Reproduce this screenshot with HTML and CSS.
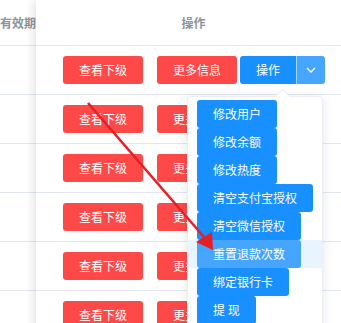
FILE: index.html
```html
<!DOCTYPE html>
<html lang="zh-CN">
<head>
    <meta charset="UTF-8">
    <title>用户列表</title>
    <link rel="stylesheet" href="styles.css">
</head>
<body>
    <div class="table">
        <div class="scroll-part">
            <div class="head-cell">有效期</div>
            <div class="cell"></div>
            <div class="cell"></div>
            <div class="cell"></div>
            <div class="cell"></div>
            <div class="cell"></div>
            <div class="cell"></div>
        </div>
        <div class="fixed-part">
            <div class="head-cell center">操作</div>
            <div class="cell ops">
                <button class="btn danger">查看下级</button>
                <button class="btn danger">更多信息</button>
                <div class="split">
                    <button class="btn primary">操作</button>
                    <button class="btn caret">
                        <svg width="10" height="6" viewBox="0 0 10 6"><path d="M1 1 L5 5 L9 1" fill="none" stroke="#fff" stroke-width="1.3"/></svg>
                    </button>
                </div>
            </div>
            <div class="cell ops"><button class="btn danger">查看下级</button><button class="btn danger">更多信息</button></div>
            <div class="cell ops"><button class="btn danger">查看下级</button><button class="btn danger">更多信息</button></div>
            <div class="cell ops"><button class="btn danger">查看下级</button><button class="btn danger">更多信息</button></div>
            <div class="cell ops"><button class="btn danger">查看下级</button><button class="btn danger">更多信息</button></div>
            <div class="cell ops"><button class="btn danger">查看下级</button><button class="btn danger">更多信息</button></div>
        </div>
    </div>

    <ul class="dropdown-menu">
        <li class="item"><button class="btn primary">修改用户</button></li>
        <li class="item"><button class="btn primary">修改余额</button></li>
        <li class="item"><button class="btn primary">修改热度</button></li>
        <li class="item"><button class="btn primary">清空支付宝授权</button></li>
        <li class="item"><button class="btn primary">清空微信授权</button></li>
        <li class="item hover"><button class="btn primary">重置退款次数</button></li>
        <li class="item"><button class="btn primary">绑定银行卡</button></li>
        <li class="item"><button class="btn primary">提 现</button></li>
    </ul>

    <svg class="annotation" width="341" height="323" viewBox="0 0 341 323">
        <line x1="88" y1="103" x2="204" y2="237" stroke="#e61e25" stroke-width="2.6"/>
        <polygon points="196,242 212,232 213,250" fill="#e61e25"/>
    </svg>
</body>
</html>
```

FILE: styles.css
```css
body {
    margin: 0;
    width: 341px;
    height: 323px;
    overflow: hidden;
    position: relative;
    background: #fff;
    font-family: "Noto Sans CJK SC", "Noto Sans", sans-serif;
    font-size: 12px;
}

.table {
    display: flex;
    width: 351px;
}

.scroll-part {
    width: 36px;
    flex-shrink: 0;
    overflow: hidden;
}

.fixed-part {
    width: 315px;
    flex-shrink: 0;
    background: #fff;
    box-shadow: -3px 0 9px rgba(0, 0, 0, 0.1);
    position: relative;
}

.head-cell {
    height: 45px;
    border-bottom: 1px solid #e3e7ef;
    display: flex;
    align-items: center;
    justify-content: flex-end;
    color: #909399;
    font-weight: bold;
    white-space: nowrap;
}

.head-cell.center {
    justify-content: center;
}

.cell {
    height: 48px;
    border-bottom: 1px solid #e3e7ef;
}

.ops {
    display: flex;
    align-items: center;
    padding-left: 27px;
    gap: 14px;
}

.btn {
    height: 28px;
    padding: 0 16px;
    border: none;
    border-radius: 3px;
    color: #fff;
    font-family: inherit;
    font-size: 12px;
    line-height: 28px;
    white-space: nowrap;
    cursor: pointer;
}

.danger {
    background: #ff4949;
}

.primary {
    background: #1890ff;
}

.split {
    display: flex;
    margin-left: -11px;
}

.split .primary {
    border-radius: 3px 0 0 3px;
}

.caret {
    width: 29px;
    padding: 0;
    background: #46a6ff;
    border-left: 1px solid rgba(255, 255, 255, 0.5);
    border-radius: 0 3px 3px 0;
    display: flex;
    align-items: center;
    justify-content: center;
}

.dropdown-menu {
    position: absolute;
    left: 187px;
    top: 96px;
    width: 134px;
    height: 240px;
    margin: 0;
    padding: 3px 0 0;
    list-style: none;
    background: #fff;
    border: 1px solid #ebeef5;
    border-radius: 4px;
    box-shadow: 0 2px 12px rgba(0, 0, 0, 0.1);
}

.dropdown-menu::before {
    content: "";
    position: absolute;
    left: 89px;
    top: -6px;
    width: 10px;
    height: 10px;
    background: #fff;
    border-left: 1px solid #ebeef5;
    border-top: 1px solid #ebeef5;
    transform: rotate(45deg);
}

.item {
    height: 28px;
    padding-left: 9px;
    display: flex;
}

.item.hover {
    background: #e8f4ff;
}

.item.hover .primary {
    background: #46a6ff;
}

.annotation {
    position: absolute;
    left: 0;
    top: 0;
    pointer-events: none;
}
```
